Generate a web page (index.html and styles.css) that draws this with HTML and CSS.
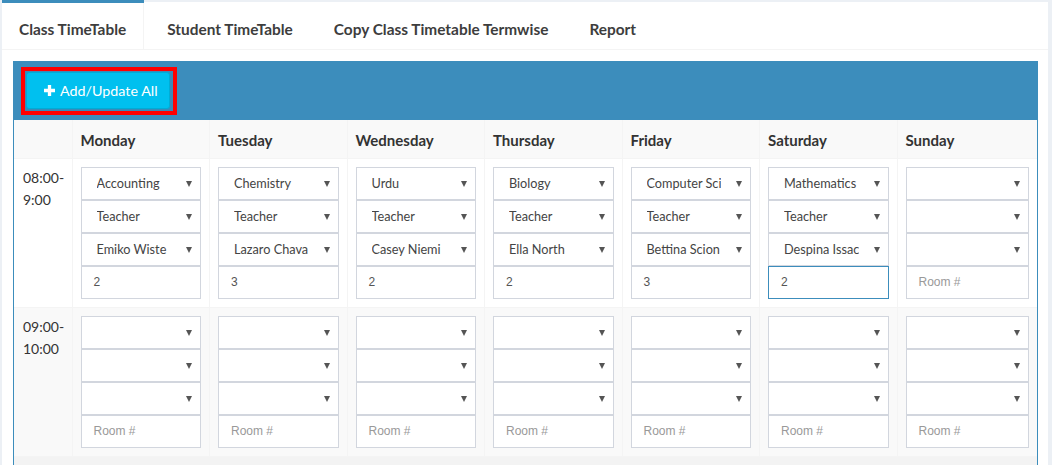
FILE: index.html
```html
<!DOCTYPE html>
<html>
<head>
<meta charset="utf-8">
<link rel="stylesheet" href="styles.css">
</head>
<body>
<div class="tabs-wrap">
  <ul class="nav">
    <li class="active"><a>Class TimeTable</a></li>
    <li><a>Student TimeTable</a></li>
    <li><a>Copy Class Timetable Termwise</a></li>
    <li><a>Report</a></li>
  </ul>
  <div class="tab-content">
    <div class="box">
      <div class="box-header">
        <span class="highlight">
          <button class="btn"><svg class="plus" width="11" height="11" viewBox="0 0 10 10"><path d="M3.5 0h3v3.5H10v3H6.5V10h-3V6.5H0v-3h3.5z" fill="#fff"/></svg>Add/Update All</button>
        </span>
      </div>
      <table class="tt">
        <colgroup><col class="c-time"><col class="c-day"><col class="c-day"><col class="c-day"><col class="c-day"><col class="c-day"><col class="c-day"><col></colgroup>
        <tr class="head">
          <th></th><th>Monday</th><th>Tuesday</th><th>Wednesday</th><th>Thursday</th><th>Friday</th><th>Saturday</th><th>Sunday</th>
        </tr>
        <tr class="row-white">
          <td class="time">08:00-<br>9:00</td>
          <td><div class="sel"><span>Accounting</span></div><div class="sel"><span>Teacher</span></div><div class="sel"><span>Emiko Wiste</span></div><div class="inp">2</div></td>
          <td><div class="sel"><span>Chemistry</span></div><div class="sel"><span>Teacher</span></div><div class="sel"><span>Lazaro Chava</span></div><div class="inp">3</div></td>
          <td><div class="sel"><span>Urdu</span></div><div class="sel"><span>Teacher</span></div><div class="sel"><span>Casey Niemi</span></div><div class="inp">2</div></td>
          <td><div class="sel"><span>Biology</span></div><div class="sel"><span>Teacher</span></div><div class="sel"><span>Ella North</span></div><div class="inp">2</div></td>
          <td><div class="sel"><span>Computer Sci</span></div><div class="sel"><span>Teacher</span></div><div class="sel"><span>Bettina Scion</span></div><div class="inp">3</div></td>
          <td><div class="sel"><span>Mathematics</span></div><div class="sel"><span>Teacher</span></div><div class="sel"><span>Despina Issac</span></div><div class="inp focus">2</div></td>
          <td><div class="sel"><span></span></div><div class="sel"><span></span></div><div class="sel"><span></span></div><div class="inp ph">Room #</div></td>
        </tr>
        <tr class="row-gray">
          <td class="time">09:00-<br>10:00</td>
          <td><div class="sel"><span></span></div><div class="sel"><span></span></div><div class="sel"><span></span></div><div class="inp ph">Room #</div></td>
          <td><div class="sel"><span></span></div><div class="sel"><span></span></div><div class="sel"><span></span></div><div class="inp ph">Room #</div></td>
          <td><div class="sel"><span></span></div><div class="sel"><span></span></div><div class="sel"><span></span></div><div class="inp ph">Room #</div></td>
          <td><div class="sel"><span></span></div><div class="sel"><span></span></div><div class="sel"><span></span></div><div class="inp ph">Room #</div></td>
          <td><div class="sel"><span></span></div><div class="sel"><span></span></div><div class="sel"><span></span></div><div class="inp ph">Room #</div></td>
          <td><div class="sel"><span></span></div><div class="sel"><span></span></div><div class="sel"><span></span></div><div class="inp ph">Room #</div></td>
          <td><div class="sel"><span></span></div><div class="sel"><span></span></div><div class="sel"><span></span></div><div class="inp ph">Room #</div></td>
        </tr>
      </table>
      <div class="foot-strip"></div>
    </div>
  </div>
</div>
</body>
</html>
```

FILE: styles.css
```css
* { box-sizing: border-box; }
html, body { margin: 0; padding: 0; }
body {
  background: #ecf0f5;
  font-family: Lato, "Open Sans", sans-serif;
  color: #333;
  font-size: 14px;
  overflow: hidden;
}
.tabs-wrap {
  margin: 2px 4px 0 2px;
  background: #fff;
  height: 480px;
}
.nav {
  list-style: none;
  margin: 0;
  padding: 0;
  display: flex;
  border-bottom: 1px solid #f4f4f4;
}
.nav li {
  margin-top: -2px;
  margin-right: 5px;
  border-top: 3px solid transparent;
}
.nav li a {
  display: block;
  padding: 16px 17px 10px;
  line-height: 20px;
  font-size: 15.4px;
  font-weight: 700;
  color: #3d3d3d;
  border-left: 1px solid transparent;
  border-right: 1px solid transparent;
  white-space: nowrap;
}
.nav li:first-child a { padding-left: 16px; }
.nav li.active { border-top-color: #3c8dbc; }
.nav li.active a { border-right-color: #f4f4f4; }
.tab-content {
  padding: 11px 10px 0 11px;
}
.box {
  border-left: 1px solid #3c8dbc;
  border-right: 1px solid #3c8dbc;
  background: #fff;
}
.box-header {
  background: #3c8dbc;
  height: 59px;
  padding: 6px 0 0 7px;
}
.highlight {
  display: inline-block;
  border: 4px solid #ff0000;
  padding: 1px 3px 2px 1px;
  background: #3a8ab8;
}
.btn {
  display: flex;
  align-items: center;
  gap: 5px;
  width: 144px;
  height: 37px;
  background: #00c0ef;
  border: 1px solid #00acd6;
  border-radius: 3px;
  color: #fff;
  font-family: Lato, "Open Sans", sans-serif;
  font-size: 14.3px;
  padding: 0 0 0 17px;
}
.plus { display: block; }
.tt {
  width: 100%;
  border-collapse: collapse;
  table-layout: fixed;
}
.c-time { width: 58px; }
.c-day { width: 137.5px; }
.tt th, .tt td {
  border: 1px solid #f4f4f4;
  vertical-align: top;
  text-align: left;
}
.tt tr > :first-child { border-left: none; }
.tt tr > :last-child { border-right: none; }
.tt .head th { border-top: none; }
.tt th {
  padding: 10px 8px 8px;
  line-height: 20px;
  font-size: 15px;
  font-weight: 700;
  color: #333;
}
.tt td { padding: 8px; }
.head, .row-gray { background: #f9f9f9; }
.row-white { background: #fff; }
.tt td.time {
  font-size: 14px;
  line-height: 22px;
  color: #333;
  padding-left: 9px;
}
.sel {
  position: relative;
  height: 33px;
  border: 1px solid #d2d6de;
  background: #fff;
  padding: 0 29px 0 15px;
  font-size: 12.7px;
  line-height: 31px;
  color: #444;
}
.sel span {
  display: block;
  overflow: hidden;
  white-space: nowrap;
  height: 31px;
}
.sel::after {
  content: "";
  position: absolute;
  right: 8px;
  top: 13px;
  border-left: 3px solid transparent;
  border-right: 3px solid transparent;
  border-top: 6px solid #555;
}
.inp {
  height: 33px;
  border: 1px solid #d2d6de;
  background: #fff;
  padding: 0 12px;
  font-family: "Liberation Sans", Arial, sans-serif;
  font-size: 12px;
  line-height: 31px;
  color: #555;
}
.inp.ph { color: #999; }
.inp.focus { border-color: #3c8dbc; }
.foot-strip {
  height: 20px;
  background: #f3f3f3;
}
```
